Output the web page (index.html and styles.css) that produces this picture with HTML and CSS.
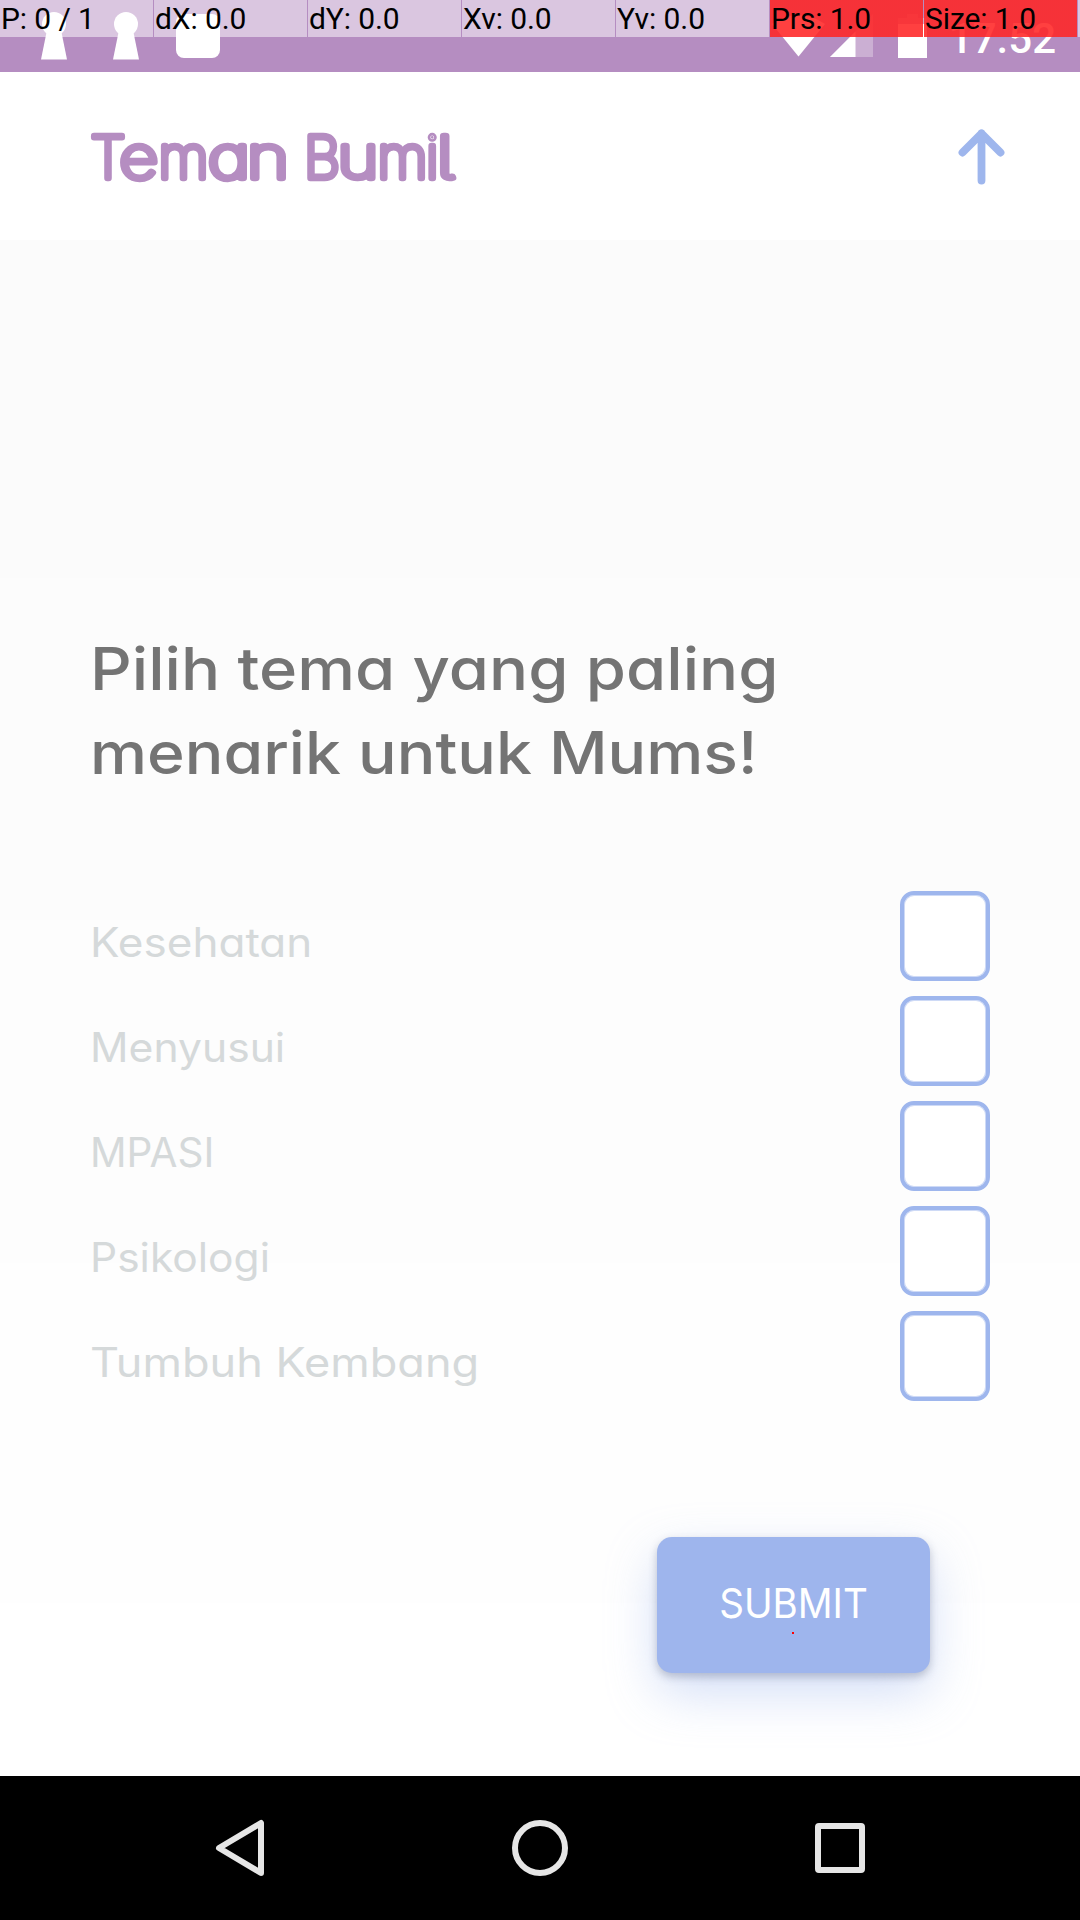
FILE: index.html
```html
<!DOCTYPE html>
<html lang="id">
<head>
<meta charset="utf-8">
<title>Teman Bumil</title>
<link rel="stylesheet" href="styles.css">
</head>
<body>
<div class="screen">
  <div class="status">
    <svg class="status-icons" width="1080" height="72" viewBox="0 0 1080 72" fill="#fff">
      <circle cx="54" cy="24" r="12"/><path d="M47 30h14l6 29.500h-26z"/>
      <circle cx="126" cy="24" r="12"/><path d="M119 30h14l6 29.500h-26z"/>
      <rect x="176" y="14" width="44" height="44" rx="8"/>
      <path d="M798.500 56.500L772 24q26-18 53 0z"/>
      <path d="M873 14v43h-43z" opacity=".3"/><path d="M855.500 31.500v25.500h-25.500z"/>
      <path d="M898 18h9v-4h11v4h9v6h-29z" opacity=".3"/><path d="M898 24h29v34h-29z"/>
    </svg>
    <span class="clock">17.52</span>
    <div class="pointer-bar">
      <span class="cell">P: 0 / 1</span><span class="cell">dX: 0.0</span><span class="cell">dY: 0.0</span><span class="cell">Xv: 0.0</span><span class="cell">Yv: 0.0</span><span class="cell hot">Prs: 1.0</span><span class="cell hot">Size: 1.0</span><span class="cell rest"></span>
    </div>
  </div>
  <header class="header">
    <svg class="brand" width="380" height="72" viewBox="84 120 380 72">
      <text y="178"><tspan x="90.500" textLength="35" lengthAdjust="spacingAndGlyphs">T</tspan><tspan x="119.500" textLength="38.500" lengthAdjust="spacingAndGlyphs">e</tspan><tspan x="158.500" textLength="50" lengthAdjust="spacingAndGlyphs">m</tspan><tspan x="208" textLength="42" lengthAdjust="spacingAndGlyphs">a</tspan><tspan x="247" textLength="42" lengthAdjust="spacingAndGlyphs">n</tspan> <tspan x="304" textLength="36" lengthAdjust="spacingAndGlyphs">B</tspan><tspan x="337.500" textLength="41" lengthAdjust="spacingAndGlyphs">u</tspan><tspan x="377.500" textLength="50" lengthAdjust="spacingAndGlyphs">m</tspan><tspan x="426">i</tspan><tspan class="tail" x="437" textLength="16.500" lengthAdjust="spacingAndGlyphs">l</tspan></text>
    </svg>
    <svg class="arrow" width="56" height="64" viewBox="0 0 56 64"><path d="M27.500 55.500V8.500M8.500 27.500L27.500 8.500L46.500 27.500"/></svg>
  </header>
  <main class="content">
    <h1 class="question"><span class="line q1">Pilih tema yang paling</span><span class="line q2">menarik untuk Mums!</span></h1>
    <div class="options">
      <label class="option"><span class="t1">Kesehatan</span><i class="box"></i></label>
      <label class="option"><span class="t2">Menyusui</span><i class="box"></i></label>
      <label class="option"><span class="t3">MPASI</span><i class="box"></i></label>
      <label class="option"><span class="t4">Psikologi</span><i class="box"></i></label>
      <label class="option"><span class="t5">Tumbuh Kembang</span><i class="box"></i></label>
    </div>
    <button class="submit"><span class="submit-label">SUBMIT</span><i class="touch"></i></button>
  </main>
  <nav class="nav">
    <svg width="64" height="64" viewBox="0 0 64 64"><path d="M11 32L53 7V57z"/></svg>
    <svg width="64" height="64" viewBox="0 0 64 64"><circle cx="32" cy="32" r="25"/></svg>
    <svg width="64" height="64" viewBox="0 0 64 64"><rect x="10" y="10" width="44" height="44" rx="1"/></svg>
  </nav>
</div>
</body>
</html>
```
FILE: styles.css
```css
* { box-sizing: border-box; }
body { margin: 0; font-family: Inter, "Open Sans", sans-serif; font-feature-settings: "cv11"; }
.screen { width: 1080px; height: 1920px; display: flex; flex-direction: column; overflow: hidden; background: #fff; }
.status { position: relative; height: 72px; background: #b58dc1; color: #fff; }
.status-icons { position: absolute; left: 0; top: 0; }
.clock { position: absolute; right: 24px; top: 13.500px; font: 500 42px/50px Roboto, sans-serif; }
.pointer-bar { position: absolute; left: 0; top: 0; width: 1080px; height: 37px; display: flex; gap: 1px; font: 30px/37px Roboto, sans-serif; color: #000; }
.cell { flex: 0 0 153px; padding-left: 1px; background: rgba(255,255,255,.5); white-space: pre; letter-spacing: -.1px; }
.hot { background: linear-gradient(rgba(255,0,0,.75), rgba(255,0,0,.75)), rgba(255,255,255,.5); }
.rest { flex: 1 1 0; min-width: 0; padding: 0; }
.header { height: 168px; padding: 48px 70px 0 84px; display: flex; justify-content: space-between; }
.brand text { font: 100 58px Inter, sans-serif; font-feature-settings: "cv11"; fill: #b58dc1; stroke: #b58dc1; stroke-width: 6.400px; stroke-linejoin: round; }
.brand .tail { font-feature-settings: "cv05"; }
.arrow { margin-top: 5px; fill: none; stroke: #9eb6ed; stroke-width: 7.800px; stroke-linecap: round; stroke-linejoin: round; }
.content { flex: 1; display: flex; flex-direction: column; padding: 387px 90px 0; background: linear-gradient(#fbfbfb 0 338px, #fcfcfc 338px 680px, #fdfdfd 680px 1023px, #fefefe 1023px 1363px, #fff 1363px); }
.question { margin: 0; font-size: 59px; line-height: 84px; font-weight: 500; color: #747474; }
.line { display: block; white-space: nowrap; transform-origin: 0 50%; }
.q1 { transform: scaleX(1.103); }
.q2 { transform: scaleX(1.089); }
.options { display: flex; flex-direction: column; gap: 15px; margin-top: 96px; }
.option { display: flex; justify-content: space-between; align-items: center; height: 90px; font-size: 40.500px; color: #d5d9da; white-space: nowrap; }
.option span { padding-top: 13px; transform-origin: 0 50%; }
.t1 { transform: scaleX(1.087); }
.t2 { transform: scaleX(1.053); }
.t4 { transform: scaleX(1.05); }
.t5 { transform: scaleX(1.113); }
.box { width: 90px; height: 90px; border: 4px solid #9eb6ed; border-radius: 14px; background: #fff; box-shadow: inset 0 0 0 1px rgba(158,182,237,.5); }
.submit { position: relative; align-self: flex-end; width: 273px; height: 136px; margin: 136px 60px 0 0; padding: 0; border: 0; border-radius: 15px; background: #9eb5ed; color: #fff; font: 400 41px Inter, sans-serif; box-shadow: 0 4px 8px rgba(70,80,110,.3), 0 20px 50px rgba(158,182,237,.45); }
.submit-label { display: block; margin-top: -4px; transform: scaleX(.94); }
.touch { position: absolute; left: 135px; top: 95px; width: 2px; height: 2px; background: #f00; }
.nav { height: 144px; padding: 0 208px; background: #000; display: flex; align-items: center; justify-content: space-between; }
.nav svg { fill: none; stroke: #e6e6e6; stroke-width: 6px; stroke-linejoin: round; }
```
